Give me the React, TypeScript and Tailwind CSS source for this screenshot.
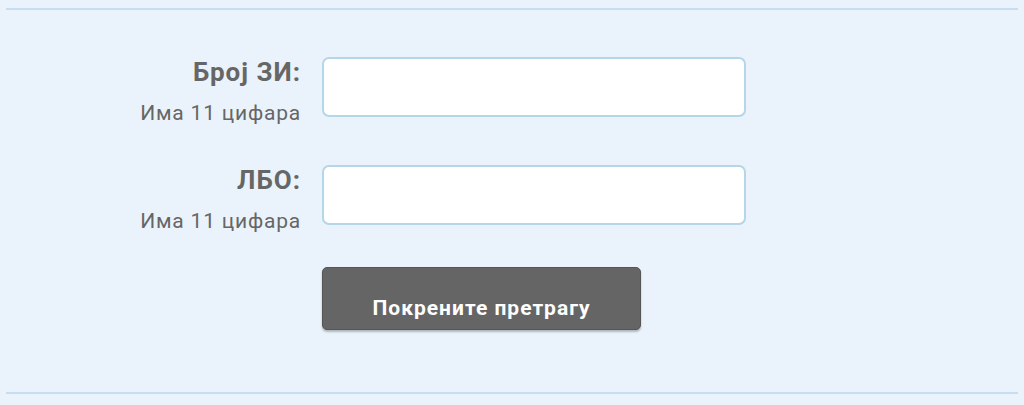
import React from 'react'

const font = { fontFamily: 'Roboto, "Noto Sans", sans-serif' }

function Field({ label }: { label: string }) {
    return (
        <div className="flex flex-row items-start h-[60px]">
            <div className="w-[294px] flex flex-col items-end">
                <span className="text-[26px] font-bold text-[#666] leading-[30px] tracking-[1px] mr-[-1px]">{label}</span>
                <span className="text-[21px] text-[#666] leading-[26px] mt-[13px] tracking-[0.8px] mr-[-1px]">Има 11 цифара</span>
            </div>
            <input
                type="text"
                className="ml-[22px] w-[424px] h-[60px] bg-white border-2 border-[#b5d6e8] rounded-[7px] outline-none"
            />
        </div>
    )
}

export default function App() {
    return (
        <div className="w-[1024px] h-[405px] bg-[#eaf3fb] px-[6px] pt-[8px]" style={font}>
            <div className="border-t-2 border-[#c6dff0]" />
            <div className="flex flex-col gap-[48px] pt-[47px]">
                <Field label="Број ЗИ:" />
                <Field label="ЛБО:" />
            </div>
            <div className="pl-[316px] pt-[42px]">
                <button className="w-[319px] h-[63px] bg-[#656565] border border-[#555] rounded-[5px] shadow-[0_2px_2px_rgba(0,0,0,0.25)] text-white font-bold text-[21px] tracking-[1px] pt-[20px]">
                    Покрените претрагу
                </button>
            </div>
            <div className="mt-[62px] border-t-2 border-[#c6dff0]" />
        </div>
    )
}
